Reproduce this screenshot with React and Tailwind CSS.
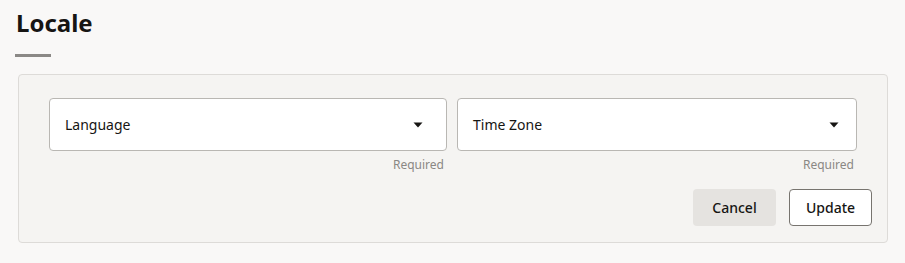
import React from 'react';

function Caret() {
    return (
        <svg width="10" height="6" viewBox="0 0 10 6" className="shrink-0">
            <path d="M0.5 0.5 L9.5 0.5 L5 5.5 Z" fill="#161513" />
        </svg>
    );
}

function SelectField({ label, grow, pad }) {
    return (
        <div className={`flex flex-col ${grow}`}>
            <div className={`h-[53px] bg-white border border-[#b9b7b3] rounded-[4px] flex items-center justify-between pl-[15px] ${pad}`}>
                <span className="text-[14px] text-[#161513]">{label}</span>
                <Caret />
            </div>
            <div className="text-right text-[12px] text-[#8a8784] pr-[3px] mt-[6px] leading-[16px]">Required</div>
        </div>
    );
}

export default function App() {
    return (
        <div className="w-[905px] h-[263px] bg-[#f9f8f7] pt-[8px] pl-[15px] pr-[17px]" style={{ fontFamily: '"Noto Sans", sans-serif' }}>
            <h1 className="text-[24px] font-bold text-[#161513] leading-[30px] pl-[1px]">Locale</h1>
            <div className="w-[36px] h-[3px] bg-[#8b8986] mt-[16px]"></div>
            <div className="mt-[17px] ml-[3px] bg-[#f5f4f2] border border-[#dddbd8] rounded-[4px] pt-[23px] pl-[30px] pr-[15px] pb-[16px]">
                <div className="flex gap-[10px] pr-[15px]">
                    <SelectField label="Language" grow="w-[398px]" pad="pr-[23px]" />
                    <SelectField label="Time Zone" grow="flex-1" pad="pr-[17px]" />
                </div>
                <div className="flex justify-end gap-[13px] mt-[16px]">
                    <button className="w-[83px] h-[37px] rounded-[4px] bg-[#e5e3e0] text-[14px] font-medium text-[#161513]">Cancel</button>
                    <button className="w-[83px] h-[37px] rounded-[4px] bg-white border border-[#77746f] text-[14px] font-medium text-[#161513]">Update</button>
                </div>
            </div>
        </div>
    );
}
